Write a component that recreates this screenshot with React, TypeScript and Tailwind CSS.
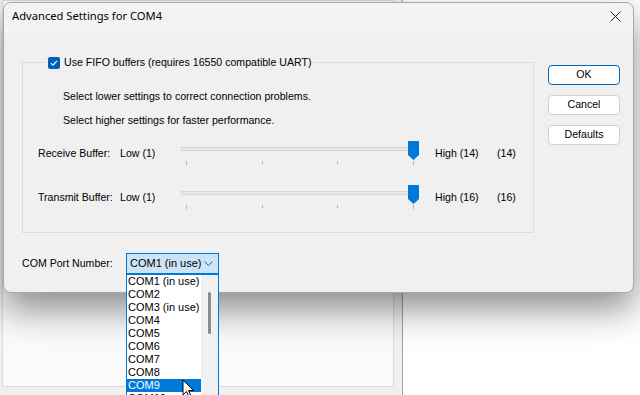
import React from "react";

const ports = ["COM1 (in use)", "COM2", "COM3 (in use)", "COM4", "COM5", "COM6", "COM7", "COM8", "COM9", "COM10"];

function Slider() {
	return (
		<svg width="244" height="26" viewBox="0 0 244 26">
			<rect x="0.5" y="6.5" width="236" height="3" fill="#e7e7e7" stroke="#d6d6d6" />
			<line x1="5.5" y1="20" x2="5.5" y2="24" stroke="#b4b4b4" />
			<line x1="81.5" y1="20" x2="81.5" y2="23" stroke="#b4b4b4" />
			<line x1="156.5" y1="20" x2="156.5" y2="23" stroke="#b4b4b4" />
			<line x1="232.5" y1="20" x2="232.5" y2="24" stroke="#b4b4b4" />
			<polygon points="227,0 238,0 238,14 232.5,19 227,14" fill="#0078d7" />
		</svg>
	);
}

function BufferRow({ label, high, value }: { label: string; high: string; value: string }) {
	return (
		<div className="flex items-center h-[26px] ml-[15px] whitespace-nowrap">
			<span className="w-[82px]">{label}</span>
			<span className="w-[61px]">Low (1)</span>
			<Slider />
			<span className="ml-[10px] w-[62px]">{high}</span>
			<span>{value}</span>
		</div>
	);
}

export default function App() {
	return (
		<div className="relative w-[640px] h-[395px] overflow-hidden bg-white font-['Liberation_Sans',Arial,sans-serif] text-[10.6px] text-black">
			{/* window behind the dialog */}
			<div className="absolute left-0 top-0 w-[403px] h-[395px] flex bg-[#f0f0f0] border-r border-[#a0a0a0] pl-[2px] pr-[8px] pb-[8px]">
				<div className="flex-1 bg-[#fafafa] border border-[#dcdcdc]" />
			</div>

			{/* dialog */}
			<div className="absolute left-[3px] top-[2px] w-[631px] h-[291px] rounded-[8px] bg-[#f0f0f0] border border-[#a8a8a8] shadow-[0_16px_36px_rgba(0,0,0,0.45)]">
				{/* Title bar */}
				<div className="h-[30px] flex items-start justify-between pl-[8px] pr-[12px] pt-[5px] bg-[#f3f3f3] rounded-t-[8px]">
					<span className="font-['Noto_Sans',sans-serif] text-[11.2px] leading-[16px]">Advanced Settings for COM4</span>
					<svg width="11" height="11" viewBox="0 0 11 11" className="mt-[3px]">
						<path d="M0.5 0.5 L10.5 10.5 M10.5 0.5 L0.5 10.5" stroke="#1a1a1a" strokeWidth="1" />
					</svg>
				</div>

				{/* Body */}
				<div className="flex pl-[18px] pt-[29px]">
					<div className="w-[512px]">
						{/* Group box */}
						<div className="h-[171px] border border-[#dcdcdc]">
							<div className="-mt-[7px] ml-[23px] w-fit flex items-center gap-[4px] px-[2px] bg-[#f0f0f0] h-[13px] whitespace-nowrap">
								<div className="w-[12px] h-[12px] rounded-[2px] bg-[#005fb8] flex items-center justify-center">
									<svg width="8" height="8" viewBox="0 0 8 8">
										<path d="M1 4.2 L3 6.2 L7 1.8" fill="none" stroke="white" strokeWidth="1.1" />
									</svg>
								</div>
								<span className="leading-[13px]">Use FIFO buffers (requires 16550 compatible UART)</span>
							</div>
							<p className="ml-[40px] mt-[21px] leading-[12px]">Select lower settings to correct connection problems.</p>
							<p className="ml-[40px] mt-[12px] leading-[12px]">Select higher settings for faster performance.</p>
							<div className="mt-[15px]">
								<BufferRow label="Receive Buffer:" high="High (14)" value="(14)" />
							</div>
							<div className="mt-[18px]">
								<BufferRow label="Transmit Buffer:" high="High (16)" value="(16)" />
							</div>
						</div>

						{/* COM port */}
						<div className="flex items-center mt-[20px]">
							<span className="w-[104px]">COM Port Number:</span>
							<div className="relative text-[11px] whitespace-nowrap">
								<div className="w-[93px] h-[21px] border border-[#0078d7] bg-[#cce4f7] flex items-center justify-between pl-[3px] pr-[5px]">
									<span>COM1 (in use)</span>
									<svg width="9" height="5" viewBox="0 0 9 5">
										<path d="M0.5 0.5 L4.5 4.5 L8.5 0.5" fill="none" stroke="#555" strokeWidth="1" />
									</svg>
								</div>
								<div className="absolute left-0 top-full w-[93px] h-[140px] bg-white border border-[#0078d7] flex">
									<div className="w-[74px] flex flex-col">
										{ports.map((p) => (
											<div
												key={p}
												className={`h-[13px] leading-[13px] pl-[1px] ${p === "COM9" ? "bg-[#0078d7] text-white" : ""}`}>
												{p}
											</div>
										))}
									</div>
									<div className="flex-1 bg-[#f0f0f0] flex justify-center pt-[17px]">
										<div className="w-[3px] h-[42px] rounded-full bg-[#8a8a8a]" />
									</div>
								</div>
							</div>
						</div>
					</div>

					{/* Buttons */}
					<div className="ml-[14px] mt-[3px] flex flex-col gap-[10px]">
						<button className="w-[72px] h-[20px] rounded-[4px] bg-white border border-[#0067c0]">OK</button>
						<button className="w-[72px] h-[20px] rounded-[4px] bg-white border border-[#d0d0d0]">Cancel</button>
						<button className="w-[72px] h-[20px] rounded-[4px] bg-white border border-[#d0d0d0]">Defaults</button>
					</div>
				</div>
			</div>

			{/* mouse cursor */}
			<svg width="14" height="20" viewBox="0 0 14 20" className="absolute left-[182px] top-[379px]">
				<path d="M1 1 L1 16 L4.5 12.5 L7 18 L9 17 L6.6 11.6 L11.5 11.6 Z" fill="white" stroke="black" strokeWidth="1" />
			</svg>
		</div>
	);
}
